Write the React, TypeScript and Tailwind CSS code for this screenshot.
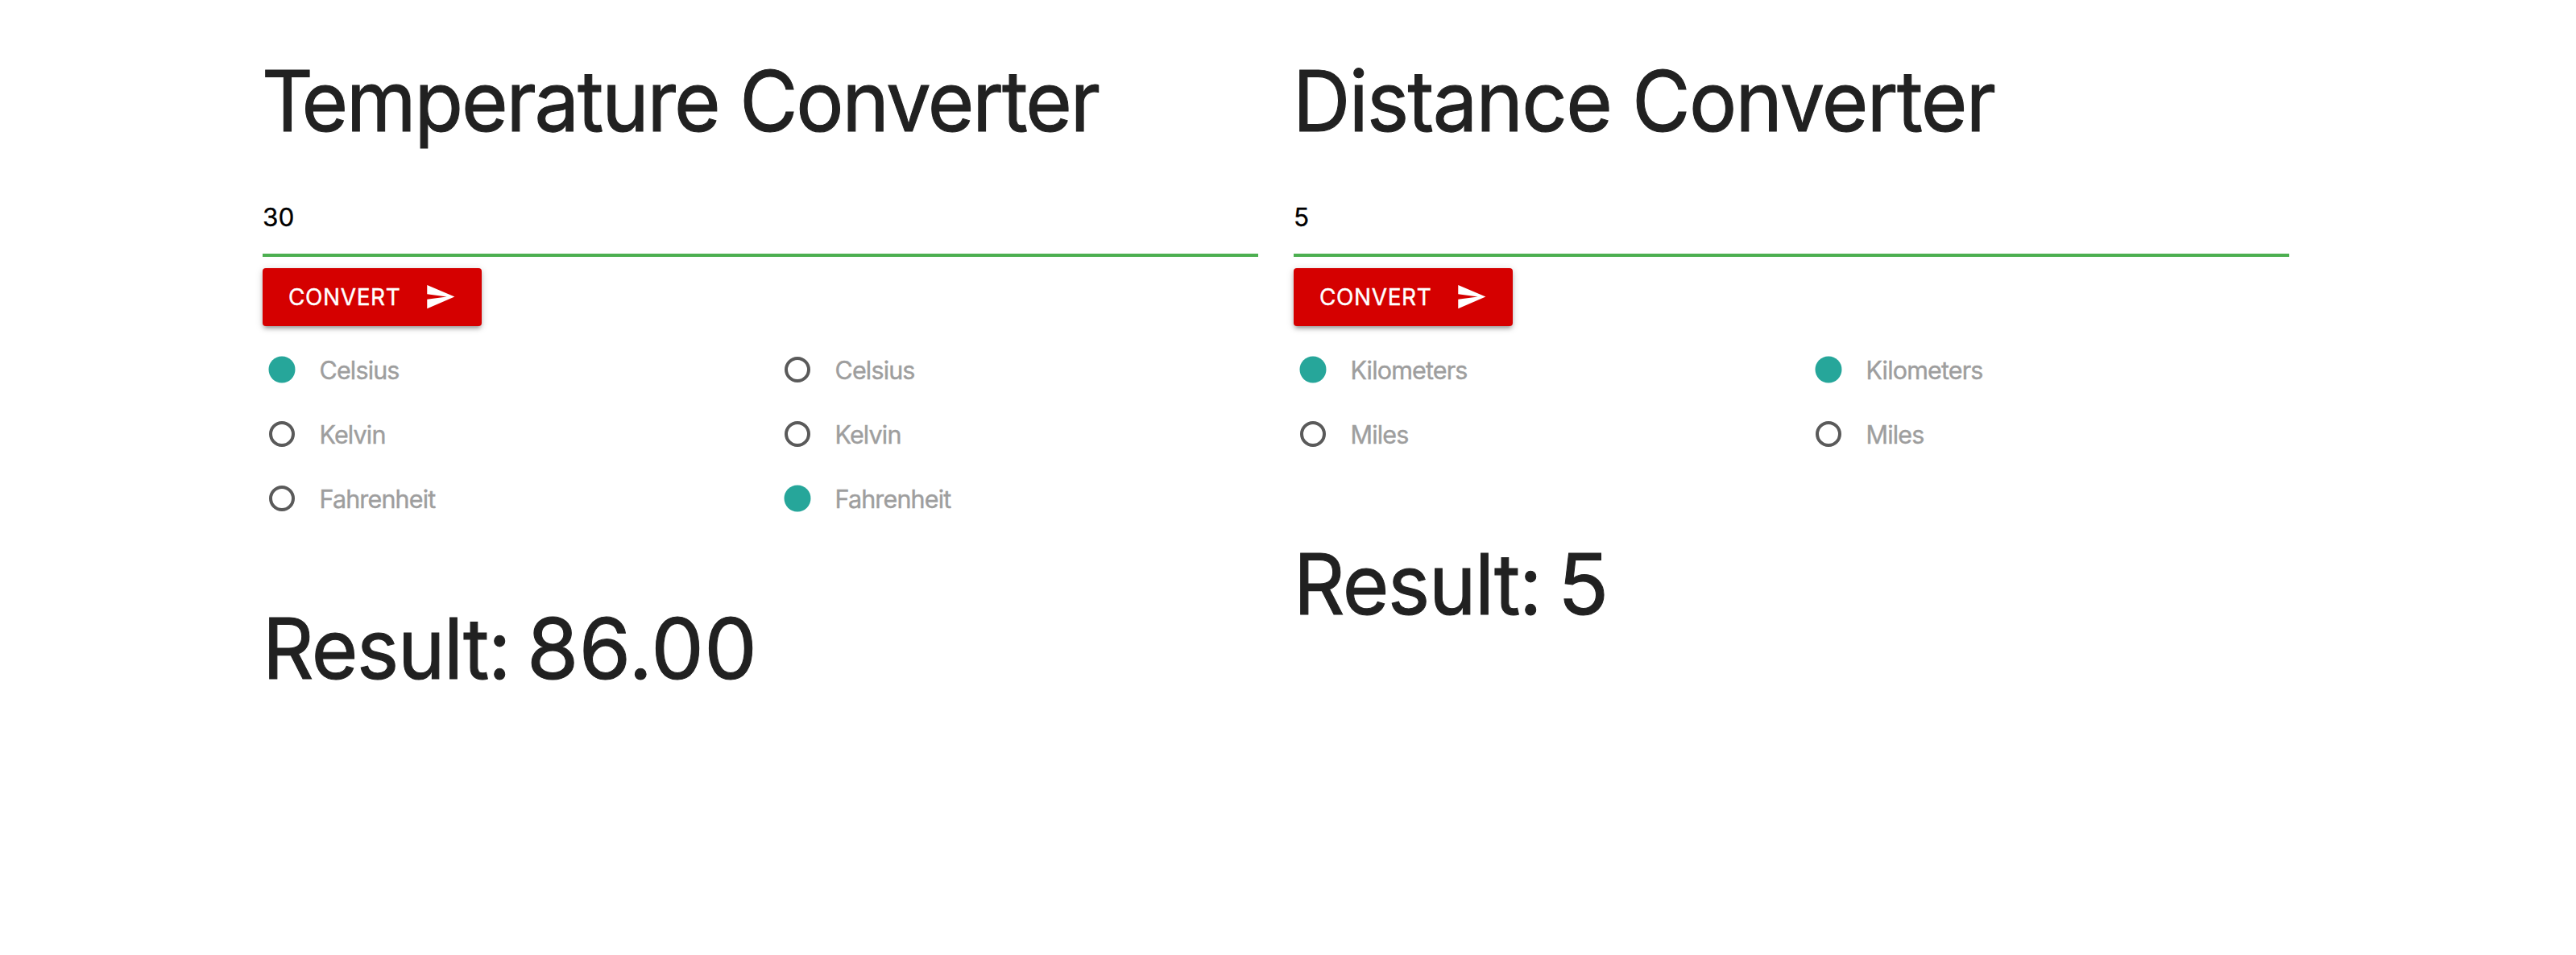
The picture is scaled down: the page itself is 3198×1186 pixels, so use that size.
type OptionProps = { label: string; checked: boolean };

function Option({ label, checked }: OptionProps) {
  return (
    <label className="flex h-20 items-center">
      <span className="flex w-[70.5px] shrink-0 pl-2">
        {checked ? (
          <span className="size-8 scale-[1.03] rounded-full bg-[#26a69a]" />
        ) : (
          <span className="size-8 rounded-full border-4 border-[#5a5a5a]" />
        )}
      </span>
      <span className="mt-px text-[30.5px] leading-[50px] tracking-[-0.85px] text-[#9e9e9e] [-webkit-text-stroke:0.4px_#9e9e9e]">
        {label}
      </span>
    </label>
  );
}

type ConverterProps = {
  title: string;
  titleTracking: string;
  value: string;
  options: string[];
  from: string;
  to: string;
  result: string;
};

function Converter({ title, titleTracking, value, options, from, to, result }: ConverterProps) {
  return (
    <section className="w-[1236px]">
      <h2
        className={`mt-[65px] -ml-px w-max origin-left scale-x-95 text-[104px] leading-[118px] whitespace-nowrap [-webkit-text-stroke:1.1px_#212121] ${titleTracking}`}
      >
        {title}
      </h2>
      <div className="mt-[41px] flex h-[94px] items-center border-b-4 border-[#4caf50] text-[31.5px] text-black">
        <span className="[-webkit-text-stroke:0.3px_black]">{value}</span>
      </div>
      <button className="mt-[14px] flex h-[72px] w-[272px] items-center justify-between rounded-[4px] bg-[#d50000] px-8 text-[28px] text-white shadow-[0_4px_4px_0_rgba(0,0,0,0.14),0_6px_2px_-4px_rgba(0,0,0,0.12),0_2px_10px_0_rgba(0,0,0,0.2)]">
        <span className="tracking-[0.6px] [-webkit-text-stroke:0.4px_white]">CONVERT</span>
        <svg viewBox="0 0 24 24" className="mb-px size-[39px] fill-white">
          <path d="M2.01 21L23 12 2.01 3 2 10l15 2-15 2z" />
        </svg>
      </button>
      <div className="mt-[14px] grid grid-cols-[640px_1fr]">
        <div>
          {options.map((o) => (
            <Option key={o} label={o} checked={o === from} />
          ))}
        </div>
        <div>
          {options.map((o) => (
            <Option key={o} label={o} checked={o === to} />
          ))}
        </div>
      </div>
      <h2 className="mt-[87px] flex text-[104px] leading-[118px] whitespace-nowrap [-webkit-text-stroke:1.1px_#212121]">
        <span className="w-[328px] origin-left scale-x-95 tracking-[-1.4px]">Result:</span>
        <span className="tracking-[0.5px]">{result}</span>
      </h2>
    </section>
  );
}

export default function App() {
  return (
    <main className="min-h-[1186px] bg-white pt-px pl-[326px] font-['Inter',sans-serif] text-[#212121]">
      <div className="flex gap-[44px]">
        <Converter
          title="Temperature Converter"
          titleTracking="tracking-[-2.2px] first-letter:tracking-[-15px]"
          value="30"
          options={["Celsius", "Kelvin", "Fahrenheit"]}
          from="Celsius"
          to="Fahrenheit"
          result="86.00"
        />
        <Converter
          title="Distance Converter"
          titleTracking="tracking-[-1.7px]"
          value="5"
          options={["Kilometers", "Miles"]}
          from="Kilometers"
          to="Kilometers"
          result="5"
        />
      </div>
    </main>
  );
}
